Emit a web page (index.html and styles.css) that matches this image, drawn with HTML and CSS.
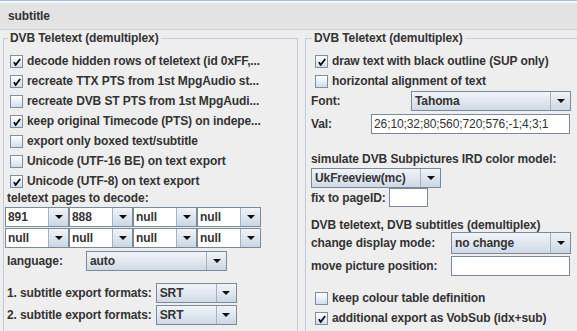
FILE: index.html
```html
<!DOCTYPE html>
<html lang="en">
<head>
    <meta charset="UTF-8">
    <title>subtitle</title>
    <link rel="stylesheet" href="styles.css">
</head>
<body>
    <div class="window-top"></div>
    <div class="tab-title">subtitle</div>

    <div class="panels">
        <fieldset class="group group-left">
            <legend>DVB Teletext (demultiplex)</legend>

            <div class="check-row"><span class="box checked"></span>decode hidden rows of teletext (id 0xFF,...</div>
            <div class="check-row"><span class="box checked"></span>recreate TTX PTS from 1st MpgAudio st...</div>
            <div class="check-row"><span class="box"></span>recreate DVB ST PTS from 1st MpgAudi...</div>
            <div class="check-row"><span class="box checked"></span>keep original Timecode (PTS) on indepe...</div>
            <div class="check-row"><span class="box"></span>export only boxed text/subtitle</div>
            <div class="check-row"><span class="box"></span>Unicode (UTF-16 BE) on text export</div>
            <div class="check-row"><span class="box checked"></span>Unicode (UTF-8) on text export</div>

            <div class="label-line">teletext pages to decode:</div>
            <div class="page-grid">
                <div class="combo small"><span class="field edit">891</span><span class="arrow"></span></div>
                <div class="combo small"><span class="field edit">888</span><span class="arrow"></span></div>
                <div class="combo small"><span class="field edit">null</span><span class="arrow"></span></div>
                <div class="combo small"><span class="field edit">null</span><span class="arrow"></span></div>
                <div class="combo small"><span class="field edit">null</span><span class="arrow"></span></div>
                <div class="combo small"><span class="field edit">null</span><span class="arrow"></span></div>
                <div class="combo small"><span class="field edit">null</span><span class="arrow"></span></div>
                <div class="combo small"><span class="field edit">null</span><span class="arrow"></span></div>
            </div>

            <div class="form-row lang-row">
                <span class="label lang-label">language:</span>
                <div class="combo lang"><span class="field">auto</span><span class="arrow"></span></div>
            </div>

            <div class="form-row export-row first">
                <span class="label">1. subtitle export formats:</span>
                <div class="combo fmt"><span class="field">SRT</span><span class="arrow"></span></div>
            </div>
            <div class="form-row export-row">
                <span class="label">2. subtitle export formats:</span>
                <div class="combo fmt"><span class="field">SRT</span><span class="arrow"></span></div>
            </div>
        </fieldset>

        <fieldset class="group group-right">
            <legend>DVB Teletext (demultiplex)</legend>

            <div class="check-row"><span class="box checked"></span>draw text with black outline (SUP only)</div>
            <div class="check-row"><span class="box"></span>horizontal alignment of text</div>

            <div class="form-row font-row">
                <span class="label font-label">Font:</span>
                <div class="combo font"><span class="field">Tahoma</span><span class="arrow"></span></div>
            </div>
            <div class="form-row val-row">
                <span class="label val-label">Val:</span>
                <span class="text-input val">26;10;32;80;560;720;576;-1;4;3;1</span>
            </div>

            <div class="label-line ird-label">simulate DVB Subpictures IRD color model:</div>
            <div class="form-row ird-row">
                <div class="combo ird"><span class="field">UkFreeview(mc)</span><span class="arrow"></span></div>
            </div>
            <div class="form-row page-row">
                <span class="label">fix to pageID:</span>
                <span class="text-input page-id"></span>
            </div>

            <div class="label-line sub-label">DVB teletext, DVB subtitles (demultiplex)</div>
            <div class="form-row mode-row">
                <span class="label wide-label">change display mode:</span>
                <div class="combo mode"><span class="field">no change</span><span class="arrow"></span></div>
            </div>
            <div class="form-row move-row">
                <span class="label wide-label">move picture position:</span>
                <span class="text-input move"></span>
            </div>

            <div class="check-row colour-row"><span class="box"></span>keep colour table definition</div>
            <div class="check-row"><span class="box checked"></span>additional export as VobSub (idx+sub)</div>
        </fieldset>
    </div>
</body>
</html>
```

FILE: styles.css
```css
html, body {
    margin: 0;
    padding: 0;
}
body {
    width: 577px;
    height: 331px;
    overflow: hidden;
    background-color: #eeeeee;
    color: #333333;
    font-family: "Liberation Sans", Arial, sans-serif;
    font-size: 12px;
    font-weight: bold;
    letter-spacing: -0.1px;
}
.window-top {
    height: 1px;
    background-color: #a9c0d8;
    border-bottom: 2px solid #f4f6f8;
}
.tab-title {
    height: 26px;
    line-height: 26px;
    padding-left: 8px;
    background-color: #e3e3e3;
    border-bottom: 1px solid #d2d2d2;
}
.panels {
    display: flex;
    align-items: flex-start;
    padding-top: 1px;
}
.group {
    flex-shrink: 0;
    margin: 0;
    padding: 6px 0 0 3px;
    border: 1px solid #c3ccd6;
    border-bottom: none;
    height: 320px;
    box-sizing: border-box;
    min-width: 0;
}
.group legend {
    margin-left: 1px;
    padding: 0 2px;
    line-height: 14px;
}
.group-left {
    margin-left: 3px;
    width: 295px;
}
.group-right {
    margin-left: 7px;
    width: 290px;
    padding-left: 5px;
    border-right: none;
}

/* checkboxes */
.check-row {
    display: flex;
    align-items: center;
    height: 20px;
    margin-left: 3px;
    white-space: nowrap;
}
.group-right .check-row {
    margin-left: 4px;
}
.box {
    width: 11px;
    height: 11px;
    border: 1px solid #7f8fa0;
    background: linear-gradient(#ffffff, #d2dde8);
    margin-right: 4px;
    position: relative;
    flex-shrink: 0;
}
.box.checked::after {
    content: "";
    position: absolute;
    left: 2px;
    top: 2px;
    width: 8px;
    height: 8px;
    background: no-repeat center/8px 8px url("data:image/svg+xml;utf8,<svg xmlns='http://www.w3.org/2000/svg' viewBox='0 0 8 8'><path d='M1 4.2 L2.6 7 L7.2 1' fill='none' stroke='black' stroke-width='1.7'/></svg>");
}

.label-line {
    line-height: 14px;
    white-space: nowrap;
}

/* combo boxes */
.combo {
    display: flex;
    height: 20px;
    box-sizing: border-box;
    border: 1px solid #7a8a99;
    background: linear-gradient(#f1f4f8, #cfdae6);
}
.combo .field {
    flex: 1;
    padding-left: 3px;
    line-height: 18px;
    white-space: nowrap;
    overflow: hidden;
}
.combo .field.edit {
    background-color: #ffffff;
    padding-left: 2px;
}
.combo .arrow {
    width: 19px;
    border-left: 1px solid #a4b3c2;
    background: linear-gradient(#f1f4f8, #cad7e4);
    display: flex;
    align-items: center;
    justify-content: center;
}
.combo .arrow::after {
    content: "";
    border-left: 4px solid transparent;
    border-right: 4px solid transparent;
    border-top: 4px solid #111111;
}
.page-grid {
    display: grid;
    grid-template-columns: repeat(4, 64px);
    row-gap: 1px;
    margin-top: 2px;
    margin-left: -2px;
}

.form-row {
    display: flex;
    align-items: center;
    white-space: nowrap;
}
.lang-row {
    margin-top: 3px;
}
.lang-label {
    width: 79px;
}
.combo.lang {
    width: 141px;
}
.export-row {
    margin-top: 2px;
}
.export-row.first {
    margin-top: 12px;
}
.export-row .label {
    margin-right: 4px;
}
.combo.fmt {
    width: 81px;
}

/* right column */
.font-label {
    width: 100px;
}
.combo.font {
    width: 160px;
}
.val-row {
    margin-top: 3px;
}
.val-label {
    width: 60px;
}
.text-input {
    display: block;
    height: 20px;
    box-sizing: border-box;
    border: 1px solid #7a8a99;
    background-color: #ffffff;
    font-weight: normal;
    line-height: 18px;
    padding-left: 2px;
}
.text-input.val {
    width: 199px;
}
.ird-label {
    margin-top: 18px;
}
.ird-row {
    margin-top: 2px;
}
.combo.ird {
    width: 130px;
}
.page-row .label {
    margin-right: 3px;
}
.text-input.page-id {
    width: 39px;
    height: 19px;
}
.sub-label {
    margin-top: 11px;
}
.wide-label {
    width: 140px;
}
.combo.mode {
    width: 120px;
    height: 22px;
}
.combo.mode .field {
    line-height: 20px;
}
.move-row {
    margin-top: 2px;
}
.text-input.move {
    width: 119px;
}
.colour-row {
    margin-top: 12px;
}
```
